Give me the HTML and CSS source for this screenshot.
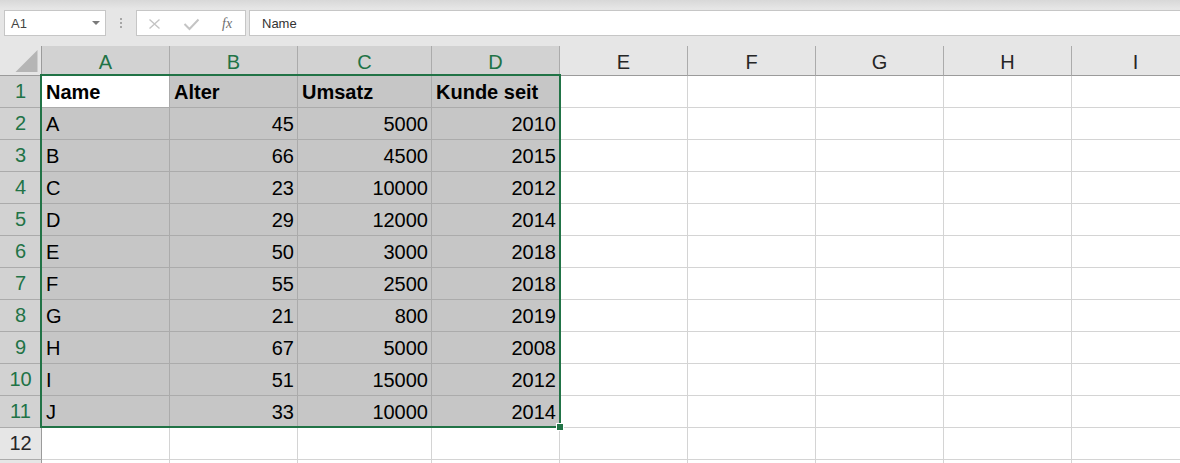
FILE: index.html
```
<!DOCTYPE html>
<html lang="de">

<head>
    <meta charset="UTF-8">
    <title>Mappe1 - Excel</title>
    <link rel="stylesheet" href="styles.css">
</head>

<body>
    <!-- Bearbeitungsleiste -->
    <div class="topbar">
        <div class="name-box">A1<span class="arrow"></span></div>
        <div class="grip"><span></span><span></span><span></span></div>
        <div class="fx-box">
            <svg width="108" height="24" viewBox="0 0 108 24">
                <path d="M12.5 8.5 L22.5 17.5 M22.5 8.5 L12.5 17.5" stroke="#c4c4c4" stroke-width="1.4" fill="none" />
                <path d="M47.5 13 L52.5 18 L61.5 8.5" stroke="#c4c4c4" stroke-width="2" fill="none" />
                <text x="85" y="16.5" class="fx-text">fx</text>
            </svg>
        </div>
        <div class="formula">Name</div>
    </div>

    <!-- Tabelle -->
    <div class="sheet">
        <div class="row head">
            <div class="corner">
                <svg width="41" height="29" viewBox="0 0 41 29">
                    <polygon points="37.5,4 37.5,26 15.5,26" fill="#b5b5b5" />
                </svg>
            </div>
            <div class="hd sel">A</div><div class="hd sel">B</div><div class="hd sel">C</div><div class="hd sel">D</div>
            <div class="hd">E</div><div class="hd">F</div><div class="hd">G</div><div class="hd">H</div><div class="hd">I</div>
        </div>

        <div class="row">
            <div class="rh sel">1</div>
            <div class="c sel active b">Name</div><div class="c sel b">Alter</div><div class="c sel b">Umsatz</div><div class="c sel b">Kunde seit</div>
            <div class="c"></div><div class="c"></div><div class="c"></div><div class="c"></div><div class="c"></div>
        </div>
        <div class="row">
            <div class="rh sel">2</div>
            <div class="c sel">A</div><div class="c sel num">45</div><div class="c sel num">5000</div><div class="c sel num">2010</div>
            <div class="c"></div><div class="c"></div><div class="c"></div><div class="c"></div><div class="c"></div>
        </div>
        <div class="row">
            <div class="rh sel">3</div>
            <div class="c sel">B</div><div class="c sel num">66</div><div class="c sel num">4500</div><div class="c sel num">2015</div>
            <div class="c"></div><div class="c"></div><div class="c"></div><div class="c"></div><div class="c"></div>
        </div>
        <div class="row">
            <div class="rh sel">4</div>
            <div class="c sel">C</div><div class="c sel num">23</div><div class="c sel num">10000</div><div class="c sel num">2012</div>
            <div class="c"></div><div class="c"></div><div class="c"></div><div class="c"></div><div class="c"></div>
        </div>
        <div class="row">
            <div class="rh sel">5</div>
            <div class="c sel">D</div><div class="c sel num">29</div><div class="c sel num">12000</div><div class="c sel num">2014</div>
            <div class="c"></div><div class="c"></div><div class="c"></div><div class="c"></div><div class="c"></div>
        </div>
        <div class="row">
            <div class="rh sel">6</div>
            <div class="c sel">E</div><div class="c sel num">50</div><div class="c sel num">3000</div><div class="c sel num">2018</div>
            <div class="c"></div><div class="c"></div><div class="c"></div><div class="c"></div><div class="c"></div>
        </div>
        <div class="row">
            <div class="rh sel">7</div>
            <div class="c sel">F</div><div class="c sel num">55</div><div class="c sel num">2500</div><div class="c sel num">2018</div>
            <div class="c"></div><div class="c"></div><div class="c"></div><div class="c"></div><div class="c"></div>
        </div>
        <div class="row">
            <div class="rh sel">8</div>
            <div class="c sel">G</div><div class="c sel num">21</div><div class="c sel num">800</div><div class="c sel num">2019</div>
            <div class="c"></div><div class="c"></div><div class="c"></div><div class="c"></div><div class="c"></div>
        </div>
        <div class="row">
            <div class="rh sel">9</div>
            <div class="c sel">H</div><div class="c sel num">67</div><div class="c sel num">5000</div><div class="c sel num">2008</div>
            <div class="c"></div><div class="c"></div><div class="c"></div><div class="c"></div><div class="c"></div>
        </div>
        <div class="row">
            <div class="rh sel">10</div>
            <div class="c sel">I</div><div class="c sel num">51</div><div class="c sel num">15000</div><div class="c sel num">2012</div>
            <div class="c"></div><div class="c"></div><div class="c"></div><div class="c"></div><div class="c"></div>
        </div>
        <div class="row">
            <div class="rh sel">11</div>
            <div class="c sel">J</div><div class="c sel num">33</div><div class="c sel num">10000</div><div class="c sel num">2014</div>
            <div class="c"></div><div class="c"></div><div class="c"></div><div class="c"></div><div class="c"></div>
        </div>
        <div class="row">
            <div class="rh">12</div>
            <div class="c"></div><div class="c"></div><div class="c"></div><div class="c"></div>
            <div class="c"></div><div class="c"></div><div class="c"></div><div class="c"></div><div class="c"></div>
        </div>
        <div class="row">
            <div class="rh"></div>
            <div class="c"></div><div class="c"></div><div class="c"></div><div class="c"></div>
            <div class="c"></div><div class="c"></div><div class="c"></div><div class="c"></div><div class="c"></div>
        </div>

        <!-- Markierung A1:D11 -->
        <div class="selection"></div>
        <div class="fill-handle"></div>
    </div>
</body>

</html>
```

FILE: styles.css
```
* {
    box-sizing: border-box;
}

body {
    margin: 0;
    width: 1180px;
    height: 463px;
    overflow: hidden;
    background: #fff;
    font-family: "Liberation Sans", Arial, sans-serif;
}

/* Bearbeitungsleiste */
.topbar {
    height: 46px;
    display: flex;
    align-items: flex-start;
    padding: 10px 0 0 4px;
    background: linear-gradient(#d8d8d8 0, #e6e6e6 9px);
}

.name-box {
    width: 102px;
    height: 26px;
    display: flex;
    align-items: center;
    padding-left: 6px;
    background: #fff;
    border: 1px solid #c6c6c6;
    font-size: 13px;
    color: #444;
}

.name-box .arrow {
    margin-left: auto;
    margin-right: 5px;
    border-left: 4px solid transparent;
    border-right: 4px solid transparent;
    border-top: 4px solid #7a7a7a;
}

.grip {
    width: 30px;
    display: flex;
    flex-direction: column;
    align-items: center;
    gap: 2px;
    padding-top: 8px;
}

.grip span {
    width: 2px;
    height: 2px;
    background: #a6a6a6;
}

.fx-box {
    width: 110px;
    height: 26px;
    background: #fff;
    border: 1px solid #c6c6c6;
}

.fx-box svg {
    display: block;
}

.fx-text {
    font-family: "Liberation Serif", serif;
    font-style: italic;
    font-size: 14px;
    fill: #6e6e6e;
}

.formula {
    flex: 1;
    height: 26px;
    margin-left: 3px;
    display: flex;
    align-items: center;
    padding-left: 12px;
    background: #fff;
    border: 1px solid #c6c6c6;
    border-right: 0;
    font-size: 13px;
    color: #333;
}

/* Tabellenraster */
.sheet {
    position: relative;
    height: 417px;
    overflow: hidden;
    font-size: 20px;
}

.row {
    display: grid;
    grid-template-columns: 42px 128px 128px 134px repeat(6, 128px);
    height: 32px;
}

.row.head {
    height: 30px;
}

.corner {
    background: #e6e6e6;
    border-right: 1px solid #9b9b9b;
    border-bottom: 1px solid #9b9b9b;
}

.corner svg {
    display: block;
}

.hd {
    background: #e6e6e6;
    border-right: 1px solid #ababab;
    border-bottom: 1px solid #9b9b9b;
    color: #262626;
    text-align: center;
    padding-top: 4px;
    line-height: 25px;
}

.hd.sel {
    background: #d2d2d2;
    color: #217346;
}

.rh {
    background: #e6e6e6;
    border-right: 1px solid #9b9b9b;
    border-bottom: 1px solid #ababab;
    color: #262626;
    text-align: center;
    line-height: 31px;
}

.rh.sel {
    background: #d2d2d2;
    color: #217346;
}

.c {
    border-right: 1px solid #d4d4d4;
    border-bottom: 1px solid #d4d4d4;
    padding: 1px 3px 0 4px;
    line-height: 30px;
    color: #000;
    white-space: nowrap;
    overflow: hidden;
}

.c.sel {
    background: #c6c6c6;
    border-color: #ababab;
}

.c.active {
    background: #fff;
}

.c.num {
    text-align: right;
}

.c.b {
    font-weight: bold;
}

/* Markierungsrahmen */
.selection {
    position: absolute;
    left: 40px;
    top: 28px;
    width: 521px;
    height: 354px;
    border: 2px solid #217346;
    pointer-events: none;
}

.fill-handle {
    position: absolute;
    left: 556px;
    top: 377px;
    width: 8px;
    height: 8px;
    background: #217346;
    border: 1px solid #fff;
}
```
